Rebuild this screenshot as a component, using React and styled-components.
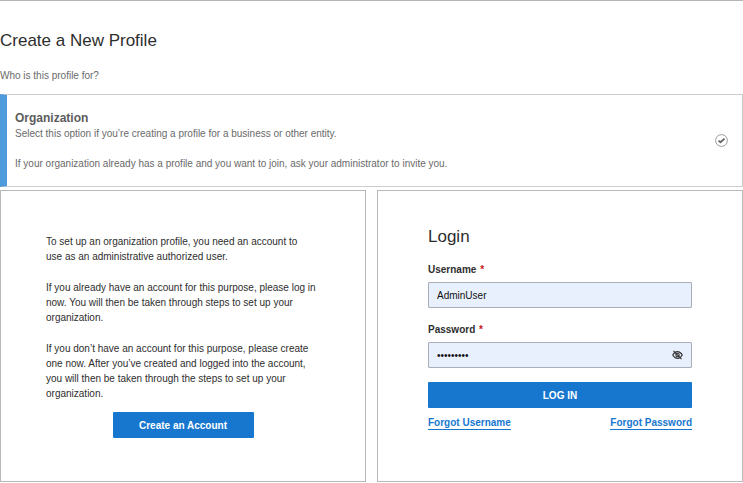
import React from 'react';
import styled, { createGlobalStyle } from 'styled-components';

const GlobalStyle = createGlobalStyle`
  * {
    box-sizing: border-box;
  }
  body {
    margin: 0;
    background-color: #fff;
    color: #2e2e2e;
    font-family: 'Liberation Sans', Arial, sans-serif;
    font-size: 10px;
    line-height: 15px;
  }
  h1, h2, h3, p {
    margin: 0;
  }
`;

const Page = styled.main`
  border-top: 1px solid #b4b4b4;
  padding-top: 29px;
`;

const Title = styled.h1`
  font-size: 17px;
  font-weight: 400;
  line-height: 22px;
`;

const Question = styled.p`
  color: #6a6a6a;
  margin: 16px 0 11px;
`;

const Option = styled.label`
  display: flex;
  align-items: center;
  justify-content: space-between;
  color: #6a6a6a;
  border: 1px solid #cdcdcd;
  border-left: 7px solid #4f9add;
  padding: 15px 14px 15px 8px;
`;

const OptionTitle = styled.h3`
  color: #5c5c5c;
  font-size: 12px;
  line-height: 16px;
`;

const OptionText = styled.p`
  & + & {
    margin-top: 15px;
  }
`;

const OptionCheck = styled.input`
  appearance: none;
  flex: none;
  width: 13px;
  height: 13px;
  margin: 0;
`;

const CheckWrap = styled.span`
  display: grid;
  flex: none;
  > * {
    grid-area: 1 / 1;
  }
`;

const Panels = styled.div`
  display: grid;
  grid-template-columns: 1fr 1fr;
  gap: 11px;
  margin-top: 3px;
  @media (max-width: 560px) {
    grid-template-columns: 1fr;
  }
`;

const Panel = styled.section`
  border: 1px solid #b9b9b9;
  padding: ${({ $top }) => $top} ${({ $side }) => $side} 43px;
`;

const Paragraph = styled.p`
  margin-bottom: 16px;
`;

const Button = styled.button`
  display: block;
  width: ${({ $width }) => $width || '100%'};
  height: 26px;
  margin: ${({ $margin }) => $margin};
  padding: 0;
  color: #fff;
  background-color: #1777cf;
  border: 0;
  border-radius: 1px;
  font: bold 10px 'Liberation Sans', Arial, sans-serif;
`;

const LoginTitle = styled.h2`
  font-size: 17px;
  font-weight: 400;
  line-height: 22px;
  margin-bottom: 14px;
`;

const Label = styled.label`
  display: block;
  font-weight: bold;
  margin-bottom: 5px;
  span {
    color: #c4161c;
    margin-left: 1px;
  }
`;

const Field = styled.div`
  display: flex;
  align-items: center;
  height: 26px;
  margin-bottom: 14px;
  padding-right: 8px;
  background-color: #e8f0fe;
  border: 1px solid #a9adb5;
  border-radius: 1px;
`;

const Input = styled.input`
  flex: 1;
  min-width: 0;
  padding: 0 8px;
  border: 0;
  outline: 0;
  background: none;
  color: #111;
  font: 10px 'Liberation Sans', Arial, sans-serif;
`;

const EyeButton = styled.button`
  display: flex;
  padding: 0;
  border: 0;
  background: none;
  color: #333;
`;

const Links = styled.div`
  display: flex;
  justify-content: space-between;
  margin-top: 8px;
`;

const ForgotLink = styled.a`
  color: #1777cf;
  font-weight: bold;
  line-height: 13px;
  text-decoration: none;
  border-bottom: 1px solid #1777cf;
`;

const CheckIcon = () => (
  <svg width="13" height="13" viewBox="0 0 13 13" fill="none" aria-hidden="true">
    <circle cx="6.5" cy="6.5" r="5.9" stroke="#9a9a9a" />
    <path d="M3.5 6.6l2 1.7 4-3.7" stroke="#666" strokeWidth="1.9" />
  </svg>
);

const EyeOffIcon = () => (
  <svg
    width="11"
    height="10"
    viewBox="0 0 11 10"
    fill="none"
    stroke="currentColor"
    strokeWidth="1.1"
    aria-hidden="true"
  >
    <path d="M.7 5C2 2.7 3.6 1.6 5.5 1.6S9 2.7 10.3 5C9 7.3 7.4 8.4 5.5 8.4S2 7.3.7 5z" />
    <circle cx="5.5" cy="5" r="1.7" />
    <path d="M1.500.8l8 8.400" />
  </svg>
);

const Required = () => <span aria-hidden="true">*</span>;

const App = () => {
  const [username, setUsername] = React.useState('AdminUser');
  const [password, setPassword] = React.useState('password1');
  const [visible, setVisible] = React.useState(false);

  return (
    <>
      <GlobalStyle />
      <Page>
        <Title>Create a New Profile</Title>
        <Question>Who is this profile for?</Question>

        <Option htmlFor="organization">
          <div>
            <OptionTitle>Organization</OptionTitle>
            <OptionText>
              Select this option if you’re creating a profile for a business or
              other entity.
            </OptionText>
            <OptionText>
              If your organization already has a profile and you want to join,
              ask your administrator to invite you.
            </OptionText>
          </div>
          <CheckWrap>
            <CheckIcon />
            <OptionCheck
              type="radio"
              id="organization"
              name="profile"
              defaultChecked
            />
          </CheckWrap>
        </Option>

        <Panels>
          <Panel $top="43px" $side="45px">
            <Paragraph>
              To set up an organization profile, you need an account to
              <br />
              use as an administrative authorized user.
            </Paragraph>
            <Paragraph>
              If you already have an account for this purpose, please log in
              now. You will then be taken through steps to set up your
              organization.
            </Paragraph>
            <Paragraph>
              If you don’t have an account for this purpose, please create one
              now. After you’ve created and logged into the account, you will
              then be taken through the steps to set up your organization.
            </Paragraph>
            <Button type="button" $width="141px" $margin="-5px auto 0">
              Create an Account
            </Button>
          </Panel>

          <Panel as="form" $top="35px" $side="50px">
            <LoginTitle>Login</LoginTitle>
            <Label htmlFor="username">
              Username <Required />
            </Label>
            <Field>
              <Input
                id="username"
                value={username}
                onChange={({ target }) => setUsername(target.value)}
              />
            </Field>
            <Label htmlFor="password">
              Password <Required />
            </Label>
            <Field>
              <Input
                id="password"
                type={visible ? 'text' : 'password'}
                value={password}
                onChange={({ target }) => setPassword(target.value)}
              />
              <EyeButton
                type="button"
                aria-label="Show password"
                onClick={() => setVisible(!visible)}
              >
                <EyeOffIcon />
              </EyeButton>
            </Field>
            <Button type="button">LOG IN</Button>
            <Links>
              <ForgotLink href="#username">Forgot Username</ForgotLink>
              <ForgotLink href="#password">Forgot Password</ForgotLink>
            </Links>
          </Panel>
        </Panels>
      </Page>
    </>
  );
};

export default App;
